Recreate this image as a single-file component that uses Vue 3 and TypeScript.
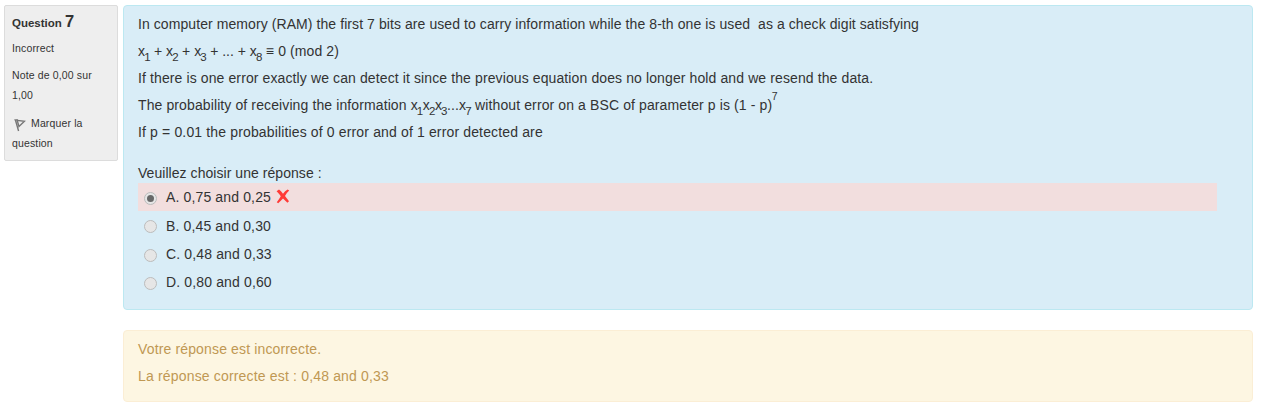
<script setup lang="ts">
interface Answer {
  letter: string
  text: string
  selected: boolean
}

const answers: Answer[] = [
  { letter: 'A', text: '0,75 and 0,25', selected: true },
  { letter: 'B', text: '0,45 and 0,30', selected: false },
  { letter: 'C', text: '0,48 and 0,33', selected: false },
  { letter: 'D', text: '0,80 and 0,60', selected: false },
]
</script>

<template>
  <main class="question">
    <aside class="info">
      <h3 class="number">Question <span class="digit">7</span></h3>
      <div class="state">Incorrect</div>
      <div class="grade">Note de 0,00 sur 1,00</div>
      <div class="flag">
        <svg class="flag-icon" width="12" height="13" viewBox="0 0 12 13">
          <path d="M1.4 1 4.6 12M3.2 1.4 10.4 2.3 5 7.4Z" fill="none" stroke="#777" stroke-width="1.4" />
          <path d="M0.3 0.8H4" stroke="#777" stroke-width="1" />
        </svg>
        <span>Marquer la question</span>
      </div>
    </aside>
    <div class="content">
      <section class="formulation">
        <p class="line l1">In computer memory (RAM) the first 7 bits are used to carry information while the 8-th one is used&nbsp; as a check digit satisfying</p>
        <p class="line l2"><i>x</i><sub>1</sub> + <i>x</i><sub>2</sub> + <i>x</i><sub>3</sub> + ... + <i>x</i><sub>8</sub> <span class="l3">≡ 0 (mod 2)</span></p>
        <p class="line l3">If there is one error exactly we can detect it since the previous equation does no longer hold and we resend the data.</p>
        <p class="line l3">The probability of receiving the information <i>x</i><sub>1</sub><i>x</i><sub>2</sub><i>x</i><sub>3</sub>...<i>x</i><sub>7</sub> without error on a BSC of parameter p is (1 - p)<sup>7</sup></p>
        <p class="line l5">If p = 0.01 the probabilities of 0 error and of 1 error detected are</p>
        <div class="prompt">Veuillez choisir une réponse :</div>
        <div class="answers">
          <div v-for="a in answers" :key="a.letter" class="answer" :class="{ incorrect: a.selected }">
            <span class="radio" :class="{ checked: a.selected }"></span>
            <span class="label">{{ a.letter }}. {{ a.text }}</span>
            <svg v-if="a.selected" class="cross" width="14" height="15" viewBox="0 0 14 15">
              <path d="M0.6 2.2 3 0.6Q5 2.2 7 4.8 9 1.8 11.6 0.4L13.2 1.6Q10.8 3.8 9 7L13 12.2 11.4 13.8 7 9.6Q4.8 12 2.2 14.2L0.8 13.2Q3 10.2 4.8 7.2 3 4.6 0.6 2.2Z" fill="#ff3b37" />
            </svg>
          </div>
        </div>
      </section>
      <section class="feedback">
        <p class="line l5">Votre réponse est incorrecte.</p>
        <p class="line correct">La réponse correcte est : 0,48 and 0,33</p>
      </section>
    </div>
  </main>
</template>

<style>
body {
  background: #fff;
}
</style>

<style scoped>
.question {
  box-sizing: border-box;
  display: flex;
  align-items: flex-start;
  gap: 5px;
  width: 1261px;
  height: 411px;
  padding: 5px 8px 0 4px;
  font-family: "Liberation Sans", Arial, sans-serif;
  font-size: 14px;
  color: #333;
}
.info {
  box-sizing: border-box;
  flex: none;
  width: 114px;
  height: 156px;
  padding: 7px 7px 0;
  border: 1px solid #dcdcdc;
  border-radius: 2px;
  background: #eee;
  font-size: 10.5px;
  line-height: 20px;
  letter-spacing: 0.14px;
}
.number {
  margin: 0 0 5px;
  font-size: 11.5px;
  line-height: 20px;
  font-weight: bold;
  letter-spacing: 0;
}
.digit {
  font-size: 16.5px;
  line-height: 1;
}
.state,
.grade {
  margin-bottom: 7px;
}
.flag {
  margin-top: 8px;
}
.flag-icon {
  margin: 0 5px 0 2px;
  vertical-align: -5px;
}
.content {
  flex: 1;
}
.formulation,
.feedback {
  box-sizing: border-box;
  border: 1px solid #bce8f1;
  border-radius: 4px;
}
.formulation {
  height: 305px;
  padding: 5px 35px 0 14px;
  background: #d9edf7;
}
.line {
  height: 27px;
  margin: 0;
  line-height: 27px;
  white-space: nowrap;
}
.l1 {
  letter-spacing: 0.077px;
}
.l3 {
  letter-spacing: 0.11px;
}
.l5 {
  letter-spacing: 0.145px;
}
.correct {
  letter-spacing: 0.17px;
}
i {
  font-style: normal;
  letter-spacing: -0.8px;
}
sub,
sup {
  position: relative;
  line-height: 0;
  vertical-align: baseline;
}
sub {
  bottom: -5px;
  font-size: 11.5px;
  letter-spacing: -0.5px;
}
sup {
  top: -10px;
  margin-left: -0.5px;
  font-size: 10.5px;
}
.prompt {
  margin-top: 17px;
  line-height: 20px;
  letter-spacing: 0.05px;
}
.answer {
  display: flex;
  align-items: center;
  height: 28px;
  padding-left: 6px;
  letter-spacing: 0.14px;
}
.answer.incorrect {
  margin-bottom: 1px;
  background: #f2dede;
}
.radio {
  box-sizing: border-box;
  display: grid;
  place-items: center;
  width: 13px;
  height: 13px;
  margin: 3px 9px 0 0;
  border: 1px solid #bcbcbc;
  border-radius: 50%;
  background: #e6e6e6;
}
.incorrect + .answer .radio {
  margin-top: 1px;
}
.checked::after {
  content: "";
  width: 7px;
  height: 7px;
  border-radius: 50%;
  background: #686868;
}
.cross {
  margin: -1px 0 0 5px;
}
.feedback {
  height: 72px;
  margin-top: 20px;
  padding: 5px 14px;
  border-color: #fbeed5;
  background: #fdf6e2;
  color: #c09853;
}
</style>
